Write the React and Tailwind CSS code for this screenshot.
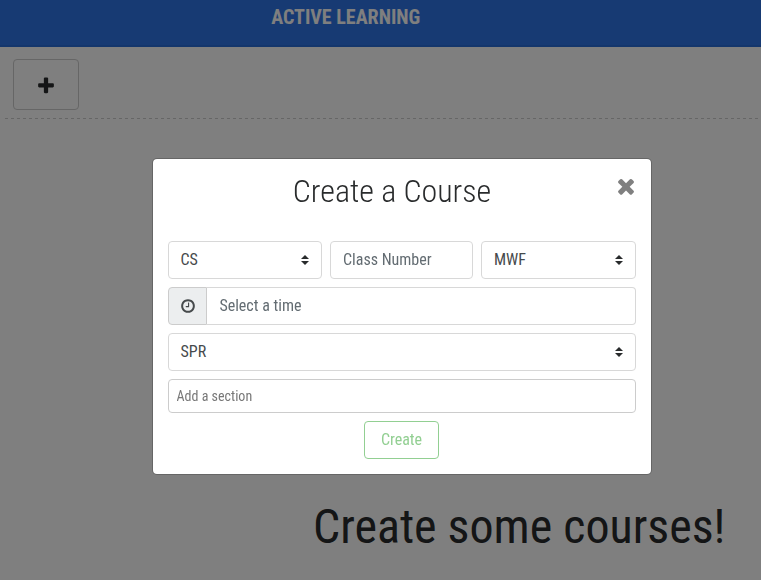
import React from "react";

const PLUS =
  "M1600 736v192q0 40-28 68t-68 28h-416v416q0 40-28 68t-68 28h-192q-40 0-68-28t-28-68v-416h-416q-40 0-68-28t-28-68v-192q0-40 28-68t68-28h416v-416q0-40 28-68t68-28h192q40 0 68 28t28 68v416h416q40 0 68 28t28 68z";
const TIMES =
  "M1490 1322q0 40-28 68l-136 136q-28 28-68 28t-68-28l-294-294-294 294q-28 28-68 28t-68-28l-136-136q-28-28-28-68t28-68l294-294-294-294q-28-28-28-68t28-68l136-136q28-28 68-28t68 28l294 294 294-294q28-28 68-28t68 28l136 136q28 28 28 68t-28 68l-294 294 294 294q28 28 28 68z";
const CLOCK =
  "M1024 544v448q0 14-9 23t-23 9h-320q-14 0-23-9t-9-23v-64q0-14 9-23t23-9h224v-352q0-14 9-23t23-9h64q14 0 23 9t9 23zm416 352q0-148-73-273t-198-198-273-73-273 73-198 198-73 273 73 273 198 198 273 73 273-73 198-198 73-273zm224 0q0 209-103 385.500t-279.500 279.500-385.500 103-385.500-103-279.500-279.500-103-385.500 103-385.500 279.500-279.500 385.500-103 385.500 103 279.500 279.500 103 385.500z";

function Icon({ d, className }) {
  return (
    <svg viewBox="0 0 1792 1792" fill="currentColor" className={className}>
      <path d={d} />
    </svg>
  );
}

function Carets() {
  return (
    <svg viewBox="0 0 4 5" className="h-[10px] w-2 shrink-0 text-[#292b2c]">
      <path fill="currentColor" d="M2 0L0 2h4zm0 5L0 3h4z" />
    </svg>
  );
}

function Select({ value, className }) {
  return (
    <button
      className={
        "flex h-[38px] items-center justify-between rounded border border-[#d8d8d8] bg-white pr-3 text-[#464a4c] " +
        className
      }
    >
      <span>{value}</span>
      <Carets />
    </button>
  );
}

export default function App() {
  return (
    <div className="h-[580px] w-full overflow-hidden bg-white font-['Roboto_Condensed','Roboto',sans-serif] text-base leading-6 text-[#292b2c] [font-stretch:75%]">
      <header className="flex h-[47px] justify-center border-b-2 border-[#286cd8] bg-[#2e74e6] pr-[69.5px] pt-[5px] text-xl leading-6 font-bold text-white">
        ACTIVE LEARNING
      </header>
      <div className="ml-[5px] h-[71px] pt-3 pl-2">
        <button className="flex h-[51px] w-[66px] items-center justify-center rounded border border-[#cccccc] pt-[2px]">
          <Icon d={PLUS} className="size-5" />
        </button>
      </div>
      <div className="ml-[5px] h-px bg-[repeating-linear-gradient(90deg,#cccccc_0_3px,transparent_3px_6px)]" />
      <h1 className="mt-[380px] ml-[313px] text-5xl leading-[56px] whitespace-nowrap">
        Create some courses!
      </h1>

      <div className="fixed inset-0 flex items-start justify-start bg-black/50 pt-[158px] pl-[152px]">
        <section className="h-[317px] w-[500px] rounded-[5px] border border-black/20 bg-white bg-clip-padding px-[15px] pt-[14px]">
          <div className="flex h-[68px] items-start">
            <h2 className="flex-1 pl-[2px] text-center text-[32px] leading-9 font-light">
              Create a Course
            </h2>
            <button className="mt-px -mr-[2px] text-[#808080]">
              <Icon d={TIMES} className="size-6" />
            </button>
          </div>
          <div className="flex flex-col gap-2">
            <div className="flex gap-2">
              <Select value="CS" className="w-[154px] pl-[11.5px]" />
              <input
                placeholder="Class Number"
                className="h-[38px] w-[143px] rounded border border-[#d8d8d8] px-3 pb-[2px] placeholder:text-[#636c72]"
              />
              <Select value="MWF" className="w-[155px] pl-3" />
            </div>
            <div className="flex h-[38px]">
              <span className="flex w-[39px] items-center justify-center rounded-l border border-[#cccccc] bg-[#eceeef] pl-[0.5px] text-[#464a4c]">
                <Icon d={CLOCK} className="size-4" />
              </span>
              <input
                placeholder="Select a time"
                className="flex-1 rounded-r border border-l-0 border-[#d8d8d8] px-[12.4px] placeholder:text-[#636c72]"
              />
            </div>
            <Select value="SPR" className="w-full pl-[11.5px]" />
            <input
              placeholder="Add a section"
              className="h-[34px] w-full rounded border border-[#cccccc] px-[7.5px] text-sm placeholder:text-[#777777]"
            />
            <button className="mr-px h-[38px] w-[75px] self-center rounded border border-[#92cf92] text-[#92cf92]">
              Create
            </button>
          </div>
        </section>
      </div>
    </div>
  );
}
